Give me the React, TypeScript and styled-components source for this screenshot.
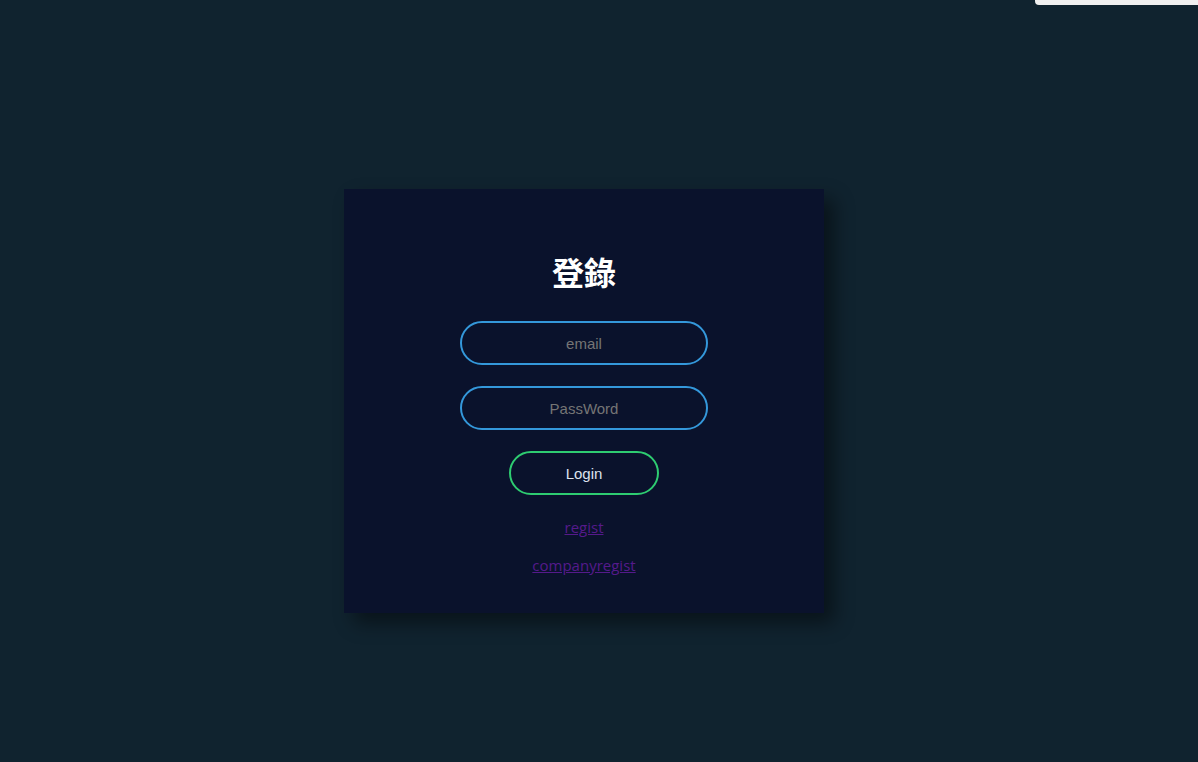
import React from "react";
import styled, { createGlobalStyle } from "styled-components";

const Global = createGlobalStyle`
  html, body { margin: 0; padding: 0; background: #10232f; }
  body { font-family: "Liberation Sans", Arial, sans-serif; }
`;

const Page = styled.div`
  position: relative;
  min-height: 762px;
  box-sizing: border-box;
  padding: 189px 0 0 344px;
  background: #10232f;
`;

const Corner = styled.div`
  position: absolute;
  top: 0;
  right: 0;
  width: 163px;
  height: 5px;
  background: #f0f0f0;
  border-bottom-left-radius: 4px;
`;

const Card = styled.form`
  width: 480px;
  height: 424px;
  box-sizing: border-box;
  padding-top: 64px;
  background: #0a122c;
  box-shadow: 10px 10px 18px rgba(0, 0, 0, 0.45);
  display: flex;
  flex-direction: column;
  align-items: center;
`;

const Title = styled.h1`
  margin: 0 0 32px;
  font-family: "Noto Sans CJK TC", "Noto Sans CJK JP", sans-serif;
  font-weight: 700;
  font-size: 32px;
  line-height: 36px;
  color: #ffffff;
`;

const Field = styled.input`
  width: 248px;
  height: 44px;
  box-sizing: border-box;
  margin: 0 0 21px;
  border: 2px solid #3498db;
  border-radius: 24px;
  background: none;
  outline: none;
  text-align: center;
  font-family: "Liberation Sans", Arial, sans-serif;
  font-size: 15px;
  color: #fff;
  &::placeholder { color: #757575; }
`;

const Submit = styled.button`
  width: 150px;
  height: 44px;
  box-sizing: border-box;
  margin: 0 0 13px;
  border: 2px solid #2ecc71;
  border-radius: 24px;
  background: none;
  font-family: "Liberation Sans", Arial, sans-serif;
  font-size: 15px;
  color: #dde2ee;
  cursor: pointer;
`;

const LinkRow = styled.div`
  height: 38px;
  display: flex;
  align-items: center;
  justify-content: center;
`;

const Link = styled.a`
  font-family: "Open Sans", "Noto Sans", sans-serif;
  font-size: 15px;
  color: #551a8b;
  text-decoration: underline;
`;

export default function App() {
  return (
    <Page>
      <Global />
      <Corner />
      <Card onSubmit={(e) => e.preventDefault()}>
        <Title>登錄</Title>
        <Field type="text" placeholder="email" />
        <Field type="password" placeholder="PassWord" />
        <Submit type="submit">Login</Submit>
        <LinkRow>
          <Link href="#regist">regist</Link>
        </LinkRow>
        <LinkRow>
          <Link href="#companyregist">companyregist</Link>
        </LinkRow>
      </Card>
    </Page>
  );
}
